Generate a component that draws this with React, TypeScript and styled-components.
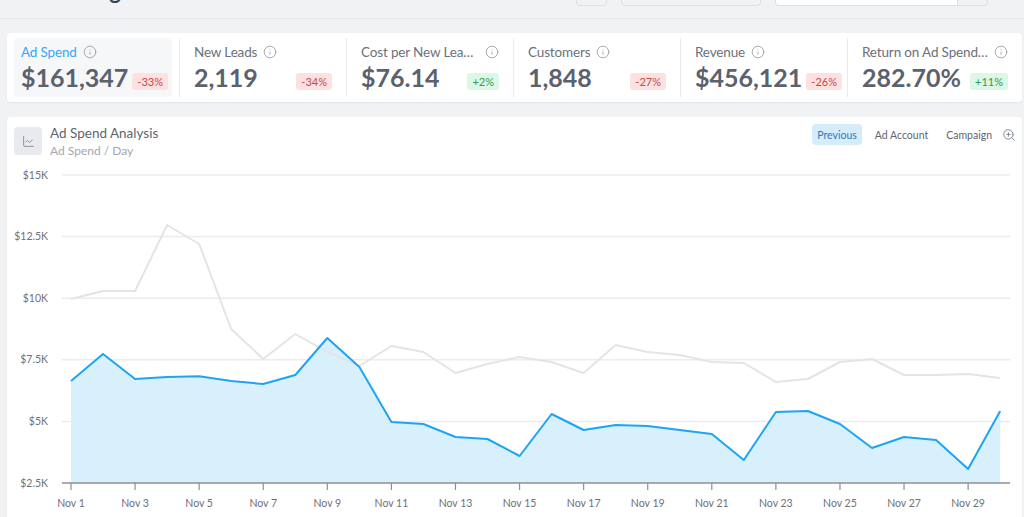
import styled, { createGlobalStyle } from "styled-components";
import { Info, ChartLine, ZoomIn } from "lucide-react";

const GlobalStyle = createGlobalStyle`
  *, *::before, *::after {
    box-sizing: border-box;
  }
  html, body {
    margin: 0;
    padding: 0;
    overflow: hidden;
    background: #f1f2f4;
    font-family: "Lato", "Liberation Sans", sans-serif;
  }
`;

const kpis = [
  { label: "Ad Spend", value: "$161,347", change: "-33%", up: false, active: true },
  { label: "New Leads", value: "2,119", change: "-34%", up: false },
  { label: "Cost per New Lead Acquisition", value: "$76.14", change: "+2%", up: true },
  { label: "Customers", value: "1,848", change: "-27%", up: false },
  { label: "Revenue", value: "$456,121", change: "-26%", up: false },
  { label: "Return on Ad Spend (ROAS)", value: "282.70%", change: "+11%", up: true },
];

const current = [
  6640, 7735, 6721, 6802, 6830, 6640, 6518, 6883, 8385, 7208, 4976, 4894, 4367, 4286, 3596,
  5300, 4651, 4854, 4813, 4651, 4489, 3433, 5381, 5422, 4894, 3920, 4367, 4245, 3068, 5422,
];

const previous = [
  9968, 10292, 10292, 12971, 12200, 8750, 7532, 8547, 7816, 7248, 8060, 7816, 6964, 7330, 7614,
  7411, 6964, 8101, 7816, 7695, 7411, 7370, 6599, 6721, 7411, 7532, 6883, 6883, 6924, 6761,
];

const ticks = [
  { v: 15000, label: "$15K" },
  { v: 12500, label: "$12.5K" },
  { v: 10000, label: "$10K" },
  { v: 7500, label: "$7.5K" },
  { v: 5000, label: "$5K" },
];

// chart geometry, in svg coords (x from the card's left edge)
const AXIS_Y = 323;
const PX_PER_UNIT = 61.6 / 2500;
const X0 = 64;
const DAY_W = 32.04;
const GRID_L = 55;
const GRID_R = 1003;

const yOf = (v: number) => AXIS_Y - (v - 2500) * PX_PER_UNIT;
const xOf = (i: number) => X0 + i * DAY_W;

const toPoints = (data: number[]) =>
  data.map((v, i) => `${xOf(i).toFixed(1)},${yOf(v).toFixed(1)}`).join(" ");

export default function App() {
  const bluePts = toPoints(current);
  const areaPts = `${xOf(0)},${AXIS_Y} ${bluePts} ${xOf(current.length - 1)},${AXIS_Y}`;

  return (
    <>
      <GlobalStyle />
      <Page>
        <Header>
          <PageTitle>Marketing</PageTitle>
          <HeaderTools>
            <ToolButton $w={31} />
            <ToolButton $w={140} />
            <SearchGroup>
              <SearchInput />
              <ToolButton $w={31} $joined />
            </SearchGroup>
          </HeaderTools>
        </Header>

        <Content>
          <KpiCard>
            {kpis.map((k) => (
              <KpiColumn key={k.label}>
                <KpiTile $active={!!k.active}>
                  <KpiLabelRow>
                    <KpiLabel $active={!!k.active}>{k.label}</KpiLabel>
                    <InfoIcon size={14} strokeWidth={1.5} />
                  </KpiLabelRow>
                  <KpiValueRow>
                    <KpiValue>{k.value}</KpiValue>
                    <Badge $up={k.up}>{k.change}</Badge>
                  </KpiValueRow>
                </KpiTile>
              </KpiColumn>
            ))}
          </KpiCard>

          <ChartCard>
            <ChartHeader>
              <TitleGroup>
                <IconBox>
                  <ChartLine size={13} strokeWidth={1.5} />
                </IconBox>
                <TitleText>
                  <ChartTitle>Ad Spend Analysis</ChartTitle>
                  <ChartSubtitle>Ad Spend / Day</ChartSubtitle>
                </TitleText>
              </TitleGroup>
              <Toggles>
                <Toggle $active>Previous</Toggle>
                <Toggle>Ad Account</Toggle>
                <Toggle>Campaign</Toggle>
                <ZoomIcon size={14} strokeWidth={1.6} />
              </Toggles>
            </ChartHeader>

            <ChartSvg width={1015} height={360} viewBox="0 0 1015 360">
              {ticks.map((t) => (
                <g key={t.label}>
                  <line x1={GRID_L} x2={GRID_R} y1={yOf(t.v)} y2={yOf(t.v)} stroke="#ececee" strokeWidth={1.5} />
                  <AxisText x={41} y={yOf(t.v) + 3.5} textAnchor="end">
                    {t.label}
                  </AxisText>
                </g>
              ))}
              <AxisText x={41} y={AXIS_Y + 3.5} textAnchor="end">
                $2.5K
              </AxisText>

              <polygon points={areaPts} fill="#d8effc" />
              <polyline points={toPoints(previous)} fill="none" stroke="#e4e4e6" strokeWidth={2} strokeLinejoin="round" />
              <polyline points={bluePts} fill="none" stroke="#1ea4f4" strokeWidth={2} strokeLinejoin="round" />

              <line x1={GRID_L} x2={GRID_R} y1={AXIS_Y} y2={AXIS_Y} stroke="#8d8f93" strokeWidth={1.5} />
              {current.map((_, i) =>
                i % 2 === 0 ? (
                  <g key={i}>
                    <line x1={xOf(i)} x2={xOf(i)} y1={AXIS_Y} y2={AXIS_Y + 7} stroke="#8d8f93" strokeWidth={1.2} />
                    <AxisText x={xOf(i)} y={AXIS_Y + 24} textAnchor="middle">
                      Nov {i + 1}
                    </AxisText>
                  </g>
                ) : null
              )}
            </ChartSvg>
          </ChartCard>
        </Content>
      </Page>
    </>
  );
}

const Page = styled.div`
  min-height: 517px;
  background: #f1f2f4;
`;

const Header = styled.header`
  height: 19px;
  overflow: hidden;
  display: flex;
  align-items: flex-end;
  justify-content: space-between;
  padding: 0 36px 12px 20px;
  border-bottom: 1px solid #e3e5e8;
`;

const PageTitle = styled.h1`
  margin: 0 0 4px 0;
  font-size: 22px;
  line-height: 1;
  font-weight: 700;
  color: #3d434c;
`;

const HeaderTools = styled.div`
  display: flex;
  align-items: flex-end;
  gap: 14px;
`;

const ToolButton = styled.div<{ $w: number; $joined?: boolean }>`
  width: ${(p) => p.$w}px;
  height: 30px;
  background: #f1f2f4;
  border: 1px solid #dcdfe3;
  border-radius: ${(p) => (p.$joined ? "0 4px 4px 0" : "4px")};
`;

const SearchGroup = styled.div`
  display: flex;
`;

const SearchInput = styled.div`
  width: 182px;
  height: 30px;
  background: #ffffff;
  border: 1px solid #dcdfe3;
  border-right: none;
  border-radius: 4px 0 0 4px;
`;

const Content = styled.main`
  padding: 14px 2px 0 7px;
  display: flex;
  flex-direction: column;
  gap: 15px;
`;

const KpiCard = styled.section`
  display: flex;
  background: #ffffff;
  border-radius: 4px;
  padding: 5px 0;
  box-shadow: 0 1px 2px rgba(0, 0, 0, 0.06);
`;

const KpiColumn = styled.div`
  flex: 0 0 167px;
  min-width: 0;
  padding: 0 7px;
  border-left: 1px solid #e8eaed;

  &:first-child {
    flex-basis: 172px;
    border-left: none;
  }

  &:last-child {
    flex: 1;
  }
`;

const KpiTile = styled.div<{ $active: boolean }>`
  padding: 5px 7px 6px;
  border-radius: 4px;
  background: ${(p) => (p.$active ? "#f6f7f9" : "transparent")};
`;

const KpiLabelRow = styled.div`
  display: flex;
  align-items: center;
  height: 18px;
`;

const KpiLabel = styled.span<{ $active: boolean }>`
  font-size: 13.5px;
  letter-spacing: -0.15px;
  color: ${(p) => (p.$active ? "#3aa5f3" : "#6b717b")};
  white-space: nowrap;
  overflow: hidden;
  text-overflow: ellipsis;
  min-width: 0;
`;

const InfoIcon = styled(Info)`
  flex-shrink: 0;
  margin-left: 6px;
  color: #9aa0a9;
`;

const KpiValueRow = styled.div`
  display: flex;
  align-items: flex-end;
  justify-content: space-between;
  gap: 4px;
  margin-top: 2px;
`;

const KpiValue = styled.span`
  font-size: 25px;
  line-height: 28px;
  font-weight: 700;
  color: #5b626d;
  white-space: nowrap;
`;

const Badge = styled.span<{ $up: boolean }>`
  font-size: 11px;
  line-height: 17px;
  padding: 0 5px;
  margin-bottom: 1px;
  border-radius: 3px;
  background: ${(p) => (p.$up ? "#dcf7e5" : "#fde1e1")};
  color: ${(p) => (p.$up ? "#2f9a5a" : "#c4494e")};
`;

const ChartCard = styled.section`
  background: #ffffff;
  border-radius: 4px;
  box-shadow: 0 1px 2px rgba(0, 0, 0, 0.06);
  height: 420px;
`;

const ChartHeader = styled.div`
  display: flex;
  justify-content: space-between;
  align-items: flex-start;
  padding: 7px 6px 0 7px;
`;

const TitleGroup = styled.div`
  display: flex;
  align-items: flex-start;
  gap: 8px;
  padding-top: 3px;
`;

const IconBox = styled.div`
  width: 28px;
  height: 28px;
  border-radius: 4px;
  background: #e8eaed;
  color: #7a818b;
  display: flex;
  align-items: center;
  justify-content: center;
`;

const TitleText = styled.div`
  display: flex;
  flex-direction: column;
  margin-top: -3px;
`;

const ChartTitle = styled.span`
  font-size: 13.5px;
  line-height: 18px;
  color: #5f6570;
`;

const ChartSubtitle = styled.span`
  font-size: 12px;
  line-height: 18px;
  color: #a2a8b1;
`;

const Toggles = styled.div`
  display: flex;
  align-items: center;
`;

const Toggle = styled.button<{ $active?: boolean }>`
  font-family: inherit;
  font-size: 10.5px;
  height: 21px;
  padding: 0 5px;
  margin-right: 8px;
  border: none;
  border-radius: 4px;
  background: ${(p) => (p.$active ? "#d5ecfb" : "transparent")};
  color: ${(p) => (p.$active ? "#2d7bb8" : "#5f6570")};
  cursor: pointer;
`;

const ZoomIcon = styled(ZoomIn)`
  color: #7a818b;
  margin-left: -3px;
`;

const ChartSvg = styled.svg`
  display: block;
`;

const AxisText = styled.text`
  font-family: "Lato", "Liberation Sans", sans-serif;
  font-size: 10.5px;
  fill: #6d7178;
`;
